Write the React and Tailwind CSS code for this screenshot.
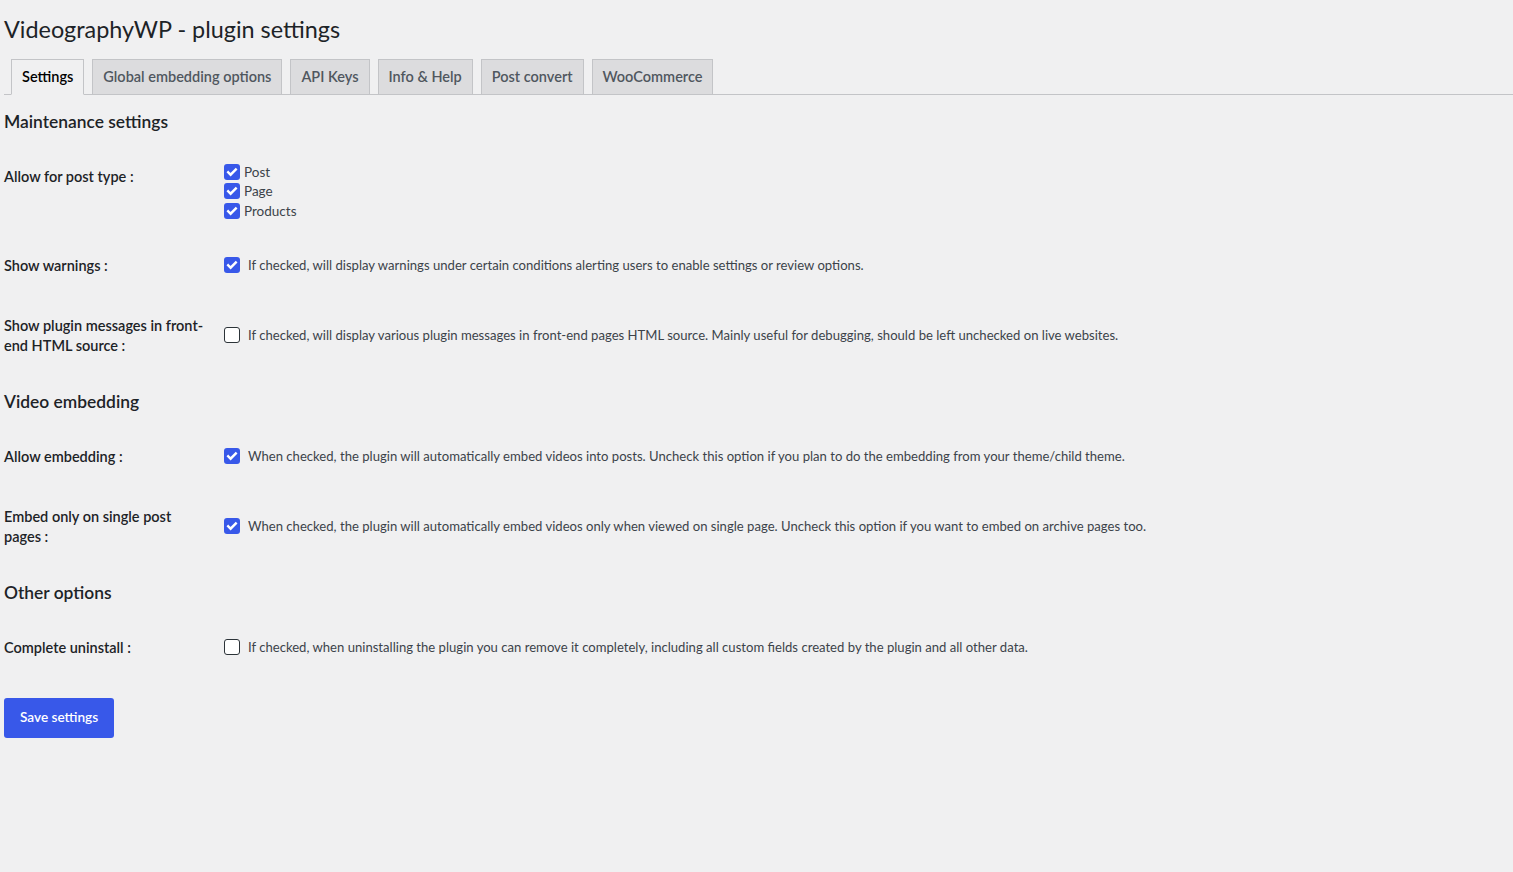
import { useState } from 'react';

const tabs = ['Settings', 'Global embedding options', 'API Keys', 'Info & Help', 'Post convert', 'WooCommerce'];

function Checkbox({ checked, onChange }) {
    return (
        <button
            type="button"
            onClick={onChange}
            className={
                checked
                    ? 'w-4 h-4 shrink-0 rounded-[3px] bg-[#3858e9] flex items-center justify-center'
                    : 'w-4 h-4 shrink-0 rounded-[3px] bg-white border border-[#2c3338]'
            }
        >
            {checked && (
                <svg width="12" height="12" viewBox="0 0 12 12">
                    <path d="M2.2 6.3l2.4 2.4L9.8 3.4" fill="none" stroke="white" strokeWidth="2.4" strokeLinecap="square" />
                </svg>
            )}
        </button>
    );
}

function Row({ label, checked, onChange, text }) {
    return (
        <div className="flex items-center">
            <div className="w-[210px] shrink-0 py-5 pr-[10px] whitespace-nowrap text-[14.5px] leading-5 font-semibold text-[#1d2327]">
                {label}
            </div>
            <div className="flex items-center pl-[10px] gap-2">
                <Checkbox checked={checked} onChange={onChange} />
                <span className="text-[13.1px] text-[#3c434a]">{text}</span>
            </div>
        </div>
    );
}

function Heading({ children, first }) {
    return (
        <h2 className={(first ? 'mt-[15px] ' : 'mt-[14px] ') + 'mb-[14px] text-[17.4px] leading-[23px] font-semibold text-[#1d2327]'}>
            {children}
        </h2>
    );
}

export default function App() {
    const [tipos, setTipos] = useState({ Post: true, Page: true, Products: true });
    const [opts, setOpts] = useState({
        warnings: true,
        messages: false,
        embed: true,
        single: true,
        uninstall: false,
    });

    const toggle = (k) => setOpts((o) => ({ ...o, [k]: !o[k] }));

    return (
        <div className="min-h-[872px] bg-[#f0f0f1] font-['Lato',sans-serif] text-[#1d2327]">
            <div className="pl-1">
                <h1 className="pt-[14px] text-[23.4px] leading-[30px] font-normal text-[#1d2327]">VideographyWP - plugin settings</h1>

                <div className="mt-[15px] flex gap-2 pl-[7px] border-b border-[#c3c4c7]">
                    {tabs.map((t, i) => (
                        <div
                            key={t}
                            className={
                                i === 0
                                    ? 'px-[10px] py-[5px] -mb-px text-[14.5px] leading-6 font-semibold text-black bg-[#f0f0f1] border border-[#c3c4c7] border-b-[#f0f0f1]'
                                    : 'px-[10px] py-[5px] -mb-px text-[14.5px] leading-6 font-semibold text-[#50575e] bg-[#dcdcde] border border-[#c3c4c7]'
                            }
                        >
                            {t}
                        </div>
                    ))}
                </div>

                <Heading first>Maintenance settings</Heading>

                <div className="flex">
                    <div className="w-[210px] shrink-0 py-5 pr-[10px] text-[14.5px] leading-5 font-semibold text-[#1d2327]">
                        Allow for post type :
                    </div>
                    <div className="pl-[10px] pt-[15px] pb-[15px]">
                        {Object.keys(tipos).map((k) => (
                            <div key={k} className="h-[19.5px] flex items-center gap-1">
                                <Checkbox checked={tipos[k]} onChange={() => setTipos((p) => ({ ...p, [k]: !p[k] }))} />
                                <span className="text-[13.5px] text-[#3c434a]">{k}</span>
                            </div>
                        ))}
                    </div>
                </div>

                <Row
                    label="Show warnings :"
                    checked={opts.warnings}
                    onChange={() => toggle('warnings')}
                    text="If checked, will display warnings under certain conditions alerting users to enable settings or review options."
                />
                <Row
                    label={<>Show plugin messages in front-<br />end HTML source :</>}
                    checked={opts.messages}
                    onChange={() => toggle('messages')}
                    text="If checked, will display various plugin messages in front-end pages HTML source. Mainly useful for debugging, should be left unchecked on live websites."
                />

                <Heading>Video embedding</Heading>

                <Row
                    label="Allow embedding :"
                    checked={opts.embed}
                    onChange={() => toggle('embed')}
                    text="When checked, the plugin will automatically embed videos into posts. Uncheck this option if you plan to do the embedding from your theme/child theme."
                />
                <Row
                    label={<>Embed only on single post<br />pages :</>}
                    checked={opts.single}
                    onChange={() => toggle('single')}
                    text="When checked, the plugin will automatically embed videos only when viewed on single page. Uncheck this option if you want to embed on archive pages too."
                />

                <Heading>Other options</Heading>

                <Row
                    label="Complete uninstall :"
                    checked={opts.uninstall}
                    onChange={() => toggle('uninstall')}
                    text="If checked, when uninstalling the plugin you can remove it completely, including all custom fields created by the plugin and all other data."
                />

                <button className="mt-5 h-10 px-4 rounded-[3px] bg-[#3858e9] text-white text-[13.6px] font-semibold">
                    Save settings
                </button>
            </div>
        </div>
    );
}
